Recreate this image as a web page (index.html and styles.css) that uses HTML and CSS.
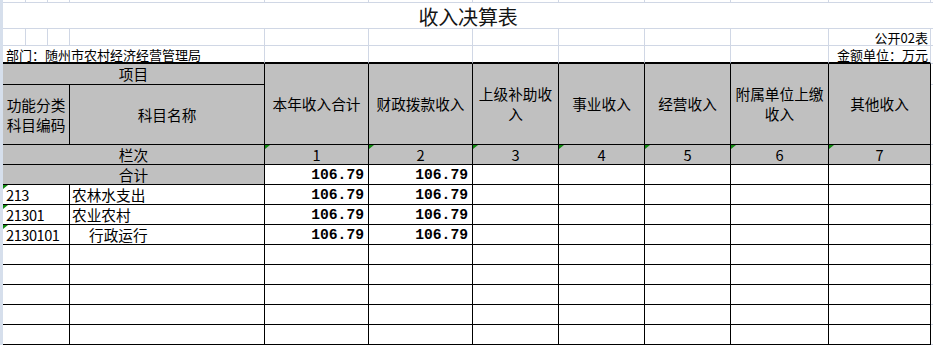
FILE: index.html
```html
<!DOCTYPE html>
<html lang="zh-CN">
<head>
<meta charset="utf-8">
<title>收入决算表</title>
<link rel="stylesheet" href="styles.css">
</head>
<body>
<div class="page">
<table class="sheet">
<colgroup>
<col class="c-a"><col class="c-b"><col class="c-c"><col class="c-d"><col class="c-e"><col class="c-f"><col class="c-g"><col class="c-h"><col class="c-i"><col class="c-j"><col class="c-k"><col class="c-l">
</colgroup>
<tbody>
<tr class="r-stub"><td></td><td></td><td></td><td></td><td></td><td></td><td></td><td></td><td></td><td></td><td></td><td class="end"></td></tr>
<tr class="r-title"><td colspan="12" class="title end">收入决算表</td></tr>
<tr class="r-info"><td></td><td></td><td></td><td></td><td></td><td></td><td></td><td></td><td></td><td></td><td class="info right">公开02表</td><td class="end"></td></tr>
<tr class="r-info2"><td colspan="4" class="info dept edge">部门：随州市农村经济经营管理局</td><td class="edge"></td><td class="edge"></td><td class="edge"></td><td class="edge"></td><td class="edge"></td><td class="edge"></td><td class="info right edge">金额单位：万元</td><td class="end"></td></tr>
<tr class="r-head1">
<td colspan="4" class="k g hd">项目</td>
<td rowspan="2" class="k g hd">本年收入合计</td>
<td rowspan="2" class="k g hd">财政拨款收入</td>
<td rowspan="2" class="k g hd">上级补助收入</td>
<td rowspan="2" class="k g hd">事业收入</td>
<td rowspan="2" class="k g hd">经营收入</td>
<td rowspan="2" class="k g hd">附属单位上缴收入</td>
<td rowspan="2" class="k g hd">其他收入</td>
<td class="end"></td>
</tr>
<tr class="r-head2">
<td colspan="3" class="k g hd">功能分类科目编码</td>
<td class="k g hd">科目名称</td>
<td class="end"></td>
</tr>
<tr class="r-row">
<td colspan="4" class="k g ctr">栏次</td>
<td class="k g ctr tri">1</td>
<td class="k g ctr tri">2</td>
<td class="k g ctr tri">3</td>
<td class="k g ctr tri">4</td>
<td class="k g ctr tri">5</td>
<td class="k g ctr tri">6</td>
<td class="k g ctr tri">7</td>
<td class="end"></td>
</tr>
<tr class="r-row">
<td colspan="4" class="k g ctr">合计</td>
<td class="k num">106.79</td>
<td class="k num">106.79</td>
<td class="k"></td><td class="k"></td><td class="k"></td><td class="k"></td><td class="k"></td>
<td class="end"></td>
</tr>
<tr class="r-row">
<td colspan="3" class="k code tri">213</td>
<td class="k name">农林水支出</td>
<td class="k num">106.79</td>
<td class="k num">106.79</td>
<td class="k"></td><td class="k"></td><td class="k"></td><td class="k"></td><td class="k"></td>
<td class="end"></td>
</tr>
<tr class="r-row">
<td colspan="3" class="k code tri">21301</td>
<td class="k name">农业农村</td>
<td class="k num">106.79</td>
<td class="k num">106.79</td>
<td class="k"></td><td class="k"></td><td class="k"></td><td class="k"></td><td class="k"></td>
<td class="end"></td>
</tr>
<tr class="r-row">
<td colspan="3" class="k code tri">2130101</td>
<td class="k name indent">行政运行</td>
<td class="k num">106.79</td>
<td class="k num">106.79</td>
<td class="k"></td><td class="k"></td><td class="k"></td><td class="k"></td><td class="k"></td>
<td class="end"></td>
</tr>
<tr class="r-row">
<td colspan="3" class="k"></td><td class="k"></td><td class="k"></td><td class="k"></td><td class="k"></td><td class="k"></td><td class="k"></td><td class="k"></td><td class="k"></td><td class="end"></td>
</tr>
<tr class="r-row">
<td colspan="3" class="k"></td><td class="k"></td><td class="k"></td><td class="k"></td><td class="k"></td><td class="k"></td><td class="k"></td><td class="k"></td><td class="k"></td><td class="end"></td>
</tr>
<tr class="r-row">
<td colspan="3" class="k"></td><td class="k"></td><td class="k"></td><td class="k"></td><td class="k"></td><td class="k"></td><td class="k"></td><td class="k"></td><td class="k"></td><td class="end"></td>
</tr>
<tr class="r-row">
<td colspan="3" class="k"></td><td class="k"></td><td class="k"></td><td class="k"></td><td class="k"></td><td class="k"></td><td class="k"></td><td class="k"></td><td class="k"></td><td class="end"></td>
</tr>
<tr class="r-row">
<td colspan="3" class="k"></td><td class="k"></td><td class="k"></td><td class="k"></td><td class="k"></td><td class="k"></td><td class="k"></td><td class="k"></td><td class="k"></td><td class="end"></td>
</tr>
</tbody>
</table>
</div>
</body>
</html>
```

FILE: styles.css
```css
html, body {
  margin: 0;
  padding: 0;
  background: #ffffff;
}

.page {
  width: 930px;
  min-height: 345px;
  border-left: 3px solid #d6dfec;
}

.sheet {
  border-collapse: separate;
  border-spacing: 0;
  table-layout: fixed;
  width: 930px;
  font-family: "Noto Sans CJK SC", sans-serif;
  font-size: 14.67px;
  color: #000000;
}

.c-a { width: 23px; }
.c-b { width: 22px; }
.c-c { width: 22px; }
.c-d { width: 195px; }
.c-e { width: 104px; }
.c-f { width: 104px; }
.c-g { width: 86px; }
.c-h { width: 86px; }
.c-i { width: 86px; }
.c-j { width: 98px; }
.c-k { width: 102px; }
.c-l { width: 2px; }

.sheet td {
  padding: 0;
  border-right: 1px solid #d0d7e5;
  border-bottom: 1px solid #d0d7e5;
  line-height: 18px;
  vertical-align: middle;
  white-space: normal;
}

.r-stub { height: 3px; }
.r-title { height: 26px; }
.r-info { height: 17px; }
.r-info2 { height: 18px; }
.r-head1 { height: 19px; }
.r-head2 { height: 60px; }
.r-row { height: 20px; }

.sheet td.end {
  border-right: none;
}

.sheet td.title {
  text-align: center;
  font-size: 20px;
  line-height: 20px;
  padding-top: 3px;
  color: #151515;
  letter-spacing: -0.2px;
}

.sheet td.info {
  font-size: 13px;
  line-height: 15px;
  white-space: nowrap;
}

.sheet td.right {
  text-align: right;
  padding-right: 2px;
}

.sheet td.dept {
  padding-left: 3px;
}

.sheet td.edge {
  border-bottom: 2px solid #000000;
}

.sheet td.k {
  border-right-color: #000000;
  border-bottom-color: #000000;
}

.sheet td.g {
  background: #c0c0c0;
}

.sheet td.hd {
  text-align: center;
  line-height: 20px;
}

.sheet td.ctr {
  text-align: center;
}

.sheet td.tri {
  position: relative;
}

.sheet td.tri::before {
  content: "";
  position: absolute;
  left: 0;
  top: 0;
  width: 0;
  height: 0;
  border-top: 4px solid #118a11;
  border-right: 5px solid transparent;
}

.sheet td.num {
  text-align: right;
  padding-right: 4px;
  font-family: "Liberation Mono", monospace;
  font-weight: bold;
  font-size: 14.67px;
}

.sheet td.code {
  text-align: left;
  padding-left: 3px;
  letter-spacing: -0.5px;
}

.sheet td.name {
  text-align: left;
  padding-left: 2px;
}

.sheet td.indent {
  padding-left: 19px;
}
```
